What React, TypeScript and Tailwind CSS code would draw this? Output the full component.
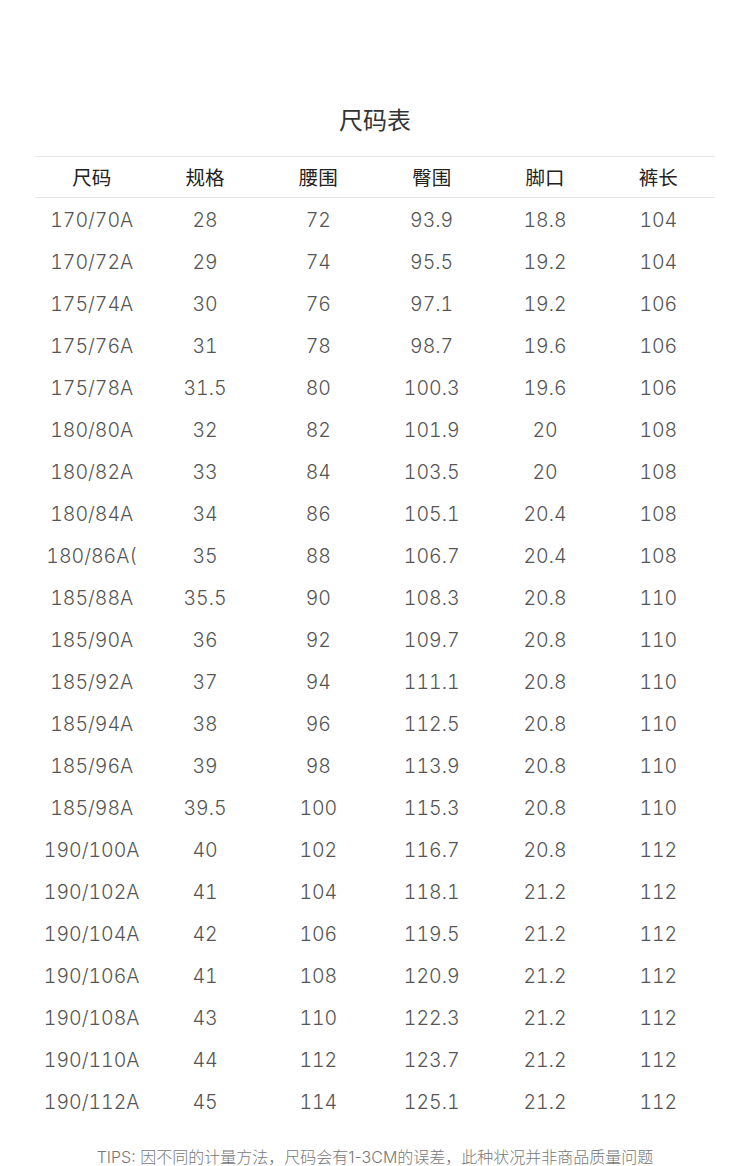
import React from 'react'

const headers = ['尺码', '规格', '腰围', '臀围', '脚口', '裤长']

const rows: string[][] = [
  ['170/70A', '28', '72', '93.9', '18.8', '104'],
  ['170/72A', '29', '74', '95.5', '19.2', '104'],
  ['175/74A', '30', '76', '97.1', '19.2', '106'],
  ['175/76A', '31', '78', '98.7', '19.6', '106'],
  ['175/78A', '31.5', '80', '100.3', '19.6', '106'],
  ['180/80A', '32', '82', '101.9', '20', '108'],
  ['180/82A', '33', '84', '103.5', '20', '108'],
  ['180/84A', '34', '86', '105.1', '20.4', '108'],
  ['180/86A(', '35', '88', '106.7', '20.4', '108'],
  ['185/88A', '35.5', '90', '108.3', '20.8', '110'],
  ['185/90A', '36', '92', '109.7', '20.8', '110'],
  ['185/92A', '37', '94', '111.1', '20.8', '110'],
  ['185/94A', '38', '96', '112.5', '20.8', '110'],
  ['185/96A', '39', '98', '113.9', '20.8', '110'],
  ['185/98A', '39.5', '100', '115.3', '20.8', '110'],
  ['190/100A', '40', '102', '116.7', '20.8', '112'],
  ['190/102A', '41', '104', '118.1', '21.2', '112'],
  ['190/104A', '42', '106', '119.5', '21.2', '112'],
  ['190/106A', '41', '108', '120.9', '21.2', '112'],
  ['190/108A', '43', '110', '122.3', '21.2', '112'],
  ['190/110A', '44', '112', '123.7', '21.2', '112'],
  ['190/112A', '45', '114', '125.1', '21.2', '112'],
]

export default function App() {
  return (
    <div className="w-[750px] h-[1166px] bg-white font-['Inter','Noto_Sans_CJK_SC',sans-serif] overflow-hidden">
      <div className="pt-[105px] h-[156px] text-center text-[24px] leading-[32px] text-[#333]">
        尺码表
      </div>
      <div className="mx-[35px]">
        <div className="grid grid-cols-6 h-[42px] pt-[3px] items-center border-t border-b border-[#e6e6e6] text-[19.5px] text-[#222] text-center">
          {headers.map((h) => (
            <div key={h}>{h}</div>
          ))}
        </div>
        {rows.map((r, i) => (
          <div key={i} className="grid grid-cols-6 h-[42px] pt-[3px] items-center text-[19.5px] font-light tabular-nums text-[#555] text-center">
            {r.map((c, j) => (
              <div key={j}>{c}</div>
            ))}
          </div>
        ))}
      </div>
      <div className="mt-[27px] text-center text-[16px] leading-[16px] text-[#777] font-light">
        TIPS: 因不同的计量方法，尺码会有1-3CM的误差，此种状况并非商品质量问题
      </div>
    </div>
  )
}
